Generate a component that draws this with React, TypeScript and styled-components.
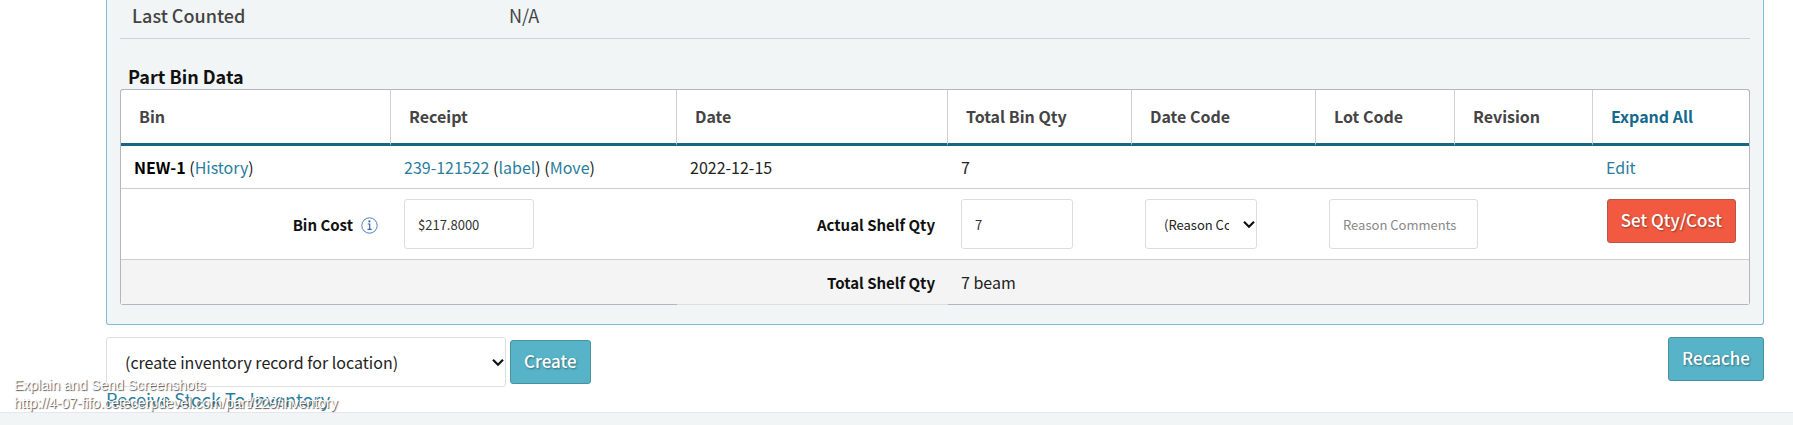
import React from "react";
import styled, { createGlobalStyle } from "styled-components";

const GlobalStyle = createGlobalStyle`
  *, *::before, *::after { box-sizing: border-box; }
  body { margin: 0; background: #fff; color: #222; }
  body, button, input, select { font-family: "Noto Sans CJK SC", "Open Sans", sans-serif; }
`;

const Page = styled.div`
  position: relative;
  display: flex;
  flex-direction: column;
  min-height: 100vh;
  font-size: 16px;
  line-height: 24px;
`;

const Content = styled.main`
  padding: 0 29px 0 106px;
`;

const Panel = styled.section`
  padding: 0 13px 19px;
  background: #f1f5f6;
  border: 1px solid #7fbdd2;
  border-top: 0;
  border-radius: 0 0 3px 3px;
`;

const Fact = styled.dl`
  display: flex;
  margin: 0;
  padding: 3px 12px 11px;
  border-bottom: 1px solid #cfd3d5;
  font-size: 18px;
  color: #444;
`;

const FactName = styled.dt`
  width: 377px;
  font-weight: 500;
`;

const FactValue = styled.dd`
  margin: 0;
`;

const Title = styled.h2`
  margin: 24px 0 0;
  padding: 0 8px;
  font-size: 18px;
  line-height: 26px;
  font-weight: 700;
  color: #111;
`;

const TableFrame = styled.div`
  border: 1px solid #b4b7b9;
  border-bottom: 0;
  border-radius: 3px;
  overflow: hidden;
  background: #fff;
`;

const Table = styled.table`
  width: 100%;
  table-layout: fixed;
  border-collapse: separate;
  border-spacing: 0;
`;

const HeadCell = styled.th`
  height: 56px;
  padding: 0 0 2px 18px;
  text-align: left;
  font-size: 16px;
  font-weight: 700;
  color: #444;
  border-bottom: 3px solid #1b6584;
  border-right: 1px solid #d0d0d0;
  &:last-child { border-right: 0; }
`;

const Row = styled.tr`
  > td { border-bottom: 1px solid #cfcfcf; }
`;

const TotalRow = styled.tr`
  background: #f4f4f4;
  > td { height: 45px; border-bottom: 1px solid #b4b7b9; }
  > td:nth-child(2) { border-bottom-color: #dcdfe0; }
`;

const Cell = styled.td<{ $align?: "right"; $tall?: boolean }>`
  height: ${(p) => (p.$tall ? 71 : 43)}px;
  padding: 0 13px;
  font-size: 16px;
  text-align: ${(p) => p.$align ?? "left"};
  white-space: nowrap;
`;

const ActionCell = styled(Cell)`
  padding-top: 10px;
  vertical-align: top;
`;

const Label = styled.label`
  font-size: 15px;
  font-weight: 700;
  color: #111;
`;

const Strong = styled.strong`
  font-weight: 700;
  color: #000;
`;

const Link = styled.a`
  color: #2a7d9f;
  text-decoration: none;
`;

const HeadLink = styled(Link)`
  color: #146a8e;
`;

const Field = styled.input<{ $w: number }>`
  display: block;
  width: ${(p) => p.$w}px;
  height: 50px;
  padding: 0 13px;
  border: 1px solid #ddd;
  border-radius: 3px;
  background: #fff;
  font-size: 13px;
  color: #333;
  &::placeholder { color: #888; opacity: 1; }
`;

const SelectBox = styled.div<{ $w: number }>`
  position: relative;
  width: ${(p) => p.$w}px;
`;

const Select = styled.select<{ $large?: boolean }>`
  display: block;
  appearance: none;
  width: 100%;
  height: 50px;
  padding: 0 27px 0 18px;
  border: 1px solid #ddd;
  border-radius: 3px;
  background: #fff;
  font-size: ${(p) => (p.$large ? 16 : 13)}px;
  color: #222;
`;

const Chevron = styled.svg`
  position: absolute;
  right: 2px;
  top: 50%;
  margin-top: -4px;
  pointer-events: none;
`;

const Button = styled.button<{ $danger?: boolean }>`
  height: 44px;
  padding: 0 13px 2px;
  border: 1px solid ${(p) => (p.$danger ? "#b4564a" : "#4a919f")};
  border-radius: 3px;
  background: ${(p) => (p.$danger ? "#f15a40" : "#56b3c8")};
  color: #fff;
  font-size: 17px;
  font-weight: 500;
  line-height: 24px;
  text-shadow: 1px 1px 2px rgba(0, 0, 0, 0.4);
`;

const InfoIcon = styled.svg`
  margin-left: 8px;
  vertical-align: -3px;
`;

const Actions = styled.div`
  display: flex;
  align-items: flex-start;
  justify-content: space-between;
  padding-top: 12px;
`;

const CreateForm = styled.form`
  display: flex;
  align-items: center;
  gap: 4px;
`;

const Receive = styled(Link)`
  display: block;
  font-size: 18px;
  line-height: 25px;
`;

const Footer = styled.footer`
  flex: 1;
  background: #f1f5f6;
  border-top: 1px solid #e4e8ea;
`;

const Caption = styled.div`
  position: absolute;
  left: 14px;
  bottom: 13px;
  font-family: "Liberation Sans", Arial, sans-serif;
  font-size: 14px;
  line-height: 18px;
  color: #fff;
  text-shadow: 1px 1px 1px #555;
`;

const columns = [
  { name: "Bin", width: 270 },
  { name: "Receipt", width: 286 },
  { name: "Date", width: 271 },
  { name: "Total Bin Qty", width: 184 },
  { name: "Date Code", width: 184 },
  { name: "Lot Code", width: 139 },
  { name: "Revision", width: 138 },
];
const totalWidth = 1628;

function DropDown(props: { label: string; option: string; width: number; large?: boolean }) {
  return (
    <SelectBox $w={props.width}>
      <Select $large={props.large} aria-label={props.label}>
        <option>{props.option}</option>
      </Select>
      <Chevron width="12" height="9" viewBox="0 0 12 9" fill="none" stroke="#111" strokeWidth="2.2" aria-hidden="true">
        <path d="M1 1.8 6 6.8 11 1.8" />
      </Chevron>
    </SelectBox>
  );
}

export default function App() {
  return (
    <>
      <GlobalStyle />
      <Page>
        <Content>
          <Panel>
            <Fact>
              <FactName>Last Counted</FactName>
              <FactValue>N/A</FactValue>
            </Fact>
            <Title>Part Bin Data</Title>
            <TableFrame>
              <Table>
                <colgroup>
                  {columns.map((c) => (
                    <col key={c.name} style={{ width: `${(c.width / totalWidth) * 100}%` }} />
                  ))}
                  <col />
                </colgroup>
                <thead>
                  <tr>
                    {columns.map((c) => (
                      <HeadCell key={c.name} scope="col">{c.name}</HeadCell>
                    ))}
                    <HeadCell scope="col"><HeadLink href="#expand">Expand All</HeadLink></HeadCell>
                  </tr>
                </thead>
                <tbody>
                  <Row>
                    <Cell><Strong>NEW-1</Strong> (<Link href="#history">History</Link>)</Cell>
                    <Cell>
                      <Link href="#receipt">239-121522</Link> (<Link href="#label">label</Link>) (<Link href="#move">Move</Link>)
                    </Cell>
                    <Cell>2022-12-15</Cell>
                    <Cell>7</Cell>
                    <Cell />
                    <Cell />
                    <Cell />
                    <Cell><Link href="#edit">Edit</Link></Cell>
                  </Row>
                  <Row>
                    <Cell $tall $align="right">
                      <Label htmlFor="bin-cost">Bin Cost</Label>
                      <InfoIcon width="17" height="17" viewBox="0 0 17 17" fill="none" stroke="#4a7fc0" aria-hidden="true">
                        <circle cx="8.5" cy="8.5" r="7.7" />
                        <path d="M6.7 7h2v5.2M6.5 12.4h4.2" stroke="#3a66a8" strokeWidth="1.2" />
                        <circle cx="8.4" cy="4.4" r="1.1" fill="#3a66a8" stroke="none" />
                      </InfoIcon>
                    </Cell>
                    <Cell $tall><Field $w={130} id="bin-cost" defaultValue="$217.8000" /></Cell>
                    <Cell $tall $align="right"><Label htmlFor="shelf-qty">Actual Shelf Qty</Label></Cell>
                    <Cell $tall><Field $w={112} id="shelf-qty" defaultValue="7" /></Cell>
                    <Cell $tall><DropDown width={112} label="Reason Code" option="(Reason Code)" /></Cell>
                    <Cell $tall colSpan={2}>
                      <Field $w={149} aria-label="Reason Comments" placeholder="Reason Comments" />
                    </Cell>
                    <ActionCell $tall $align="right"><Button type="button" $danger>Set Qty/Cost</Button></ActionCell>
                  </Row>
                  <TotalRow>
                    <Cell colSpan={2} />
                    <Cell $align="right"><Label as="span">Total Shelf Qty</Label></Cell>
                    <Cell colSpan={5}>7 beam</Cell>
                  </TotalRow>
                </tbody>
              </Table>
            </TableFrame>
          </Panel>
          <Actions>
            <CreateForm>
              <DropDown width={400} large label="Location" option="(create inventory record for location)" />
              <Button type="button">Create</Button>
            </CreateForm>
            <Button type="button">Recache</Button>
          </Actions>
          <Receive href="#receive">Receive Stock To Inventory</Receive>
        </Content>
        <Footer />
        <Caption>
          Explain and Send Screenshots
          <br />
          http://4-07-fifo.cetecerpdevel.com/part/229/inventory
        </Caption>
      </Page>
    </>
  );
}
